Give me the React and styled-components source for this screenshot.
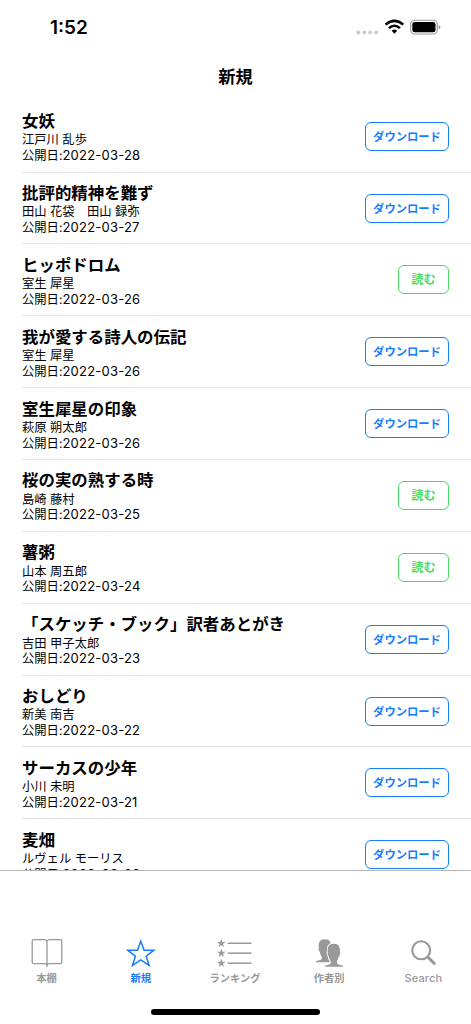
import React from 'react'
import { useState } from 'react'
import styled, { createGlobalStyle } from 'styled-components'

const GlobalStyle = createGlobalStyle`
  body {
    margin: 0;
    background-color: #fff;
    font-family: Inter, "Noto Sans CJK JP", sans-serif;
    color: #000;
  }
`

const Screen = styled.div`
  height: 1024px;
  display: flex;
  flex-direction: column;
  overflow: hidden;
`

const StatusBar = styled.header`
  height: 54px;
  flex: none;
  box-sizing: border-box;
  padding: 1px 29px 0 50px;
  display: flex;
  justify-content: space-between;
  align-items: center;
`

const Time = styled.span`
  padding-top: 1px;
  font-size: 19px;
  font-weight: 600;
  line-height: 22px;
`

const Title = styled.h1`
  height: 46.7px;
  flex: none;
  margin: 0;
  font-size: 17.2px;
  font-weight: 700;
  line-height: 45px;
  text-align: center;
`

const List = styled.ul`
  flex: 1;
  min-height: 0;
  margin: 0;
  padding: 0;
  list-style: none;
  overflow: hidden;
`

const Row = styled.li`
  height: 71.86px;
  box-sizing: border-box;
  margin-left: 22px;
  padding: 10.4px 22px 0 0;
  border-bottom: 1px solid #e4e4e5;
  display: flex;
  justify-content: space-between;
  align-items: flex-start;
`

const BookTitle = styled.h2`
  margin: 0;
  font-size: 16.45px;
  font-weight: 700;
  line-height: 21.4px;
  white-space: nowrap;
`

const Detail = styled.p`
  margin: 0;
  font-size: 12.3px;
  line-height: 15.7px;
  white-space: nowrap;
`

const PublishedOn = styled.time`
  font-size: 13px;
  letter-spacing: 0.22px;
  line-height: 1;
`

const Btn = styled.button`
  width: ${props => props.$done ? '51px' : '84px'};
  height: 29px;
  margin-top: 10.6px;
  padding: 0;
  flex: none;
  border: 1.2px solid currentColor;
  border-radius: 6px;
  background-color: transparent;
  color: ${props => props.$done ? '#4cd964' : '#147eff'};
  font-family: inherit;
  font-size: ${props => props.$done ? '12.2px' : '11.3px'};
  font-weight: 700;
  line-height: 28px;
  white-space: nowrap;
`

const TabBar = styled.nav`
  height: 154px;
  flex: none;
  box-sizing: border-box;
  border-top: 1px solid #b4b4b4;
  display: flex;
  flex-direction: column;
  align-items: center;
  justify-content: space-between;
  padding: 64px 0 9px;
`

const Tabs = styled.div`
  width: 100%;
  display: grid;
  grid-template-columns: repeat(5, 1fr);
`

const Tab = styled.button`
  padding: 0;
  border: none;
  background: none;
  display: flex;
  flex-direction: column;
  align-items: center;
  color: ${props => props.$active ? '#147eff' : '#999'};
  font-family: inherit;
  line-height: 14px;
`

const Label = styled.span`
  margin-left: -1px;
  font-size: ${props => props.$latin ? '11px' : '10.3px'};
  font-weight: ${props => props.$latin ? 500 : 700};
  letter-spacing: ${props => props.$latin ? '0.1px' : '0'};
`

const HomeBar = styled.div`
  width: 169px;
  height: 6px;
  border-radius: 3px;
  background-color: #000;
`

const STAR = 'M0 -4.4 L1.1 -1.4 L4.3 -1.4 L1.7 0.6 L2.65 3.7 L0 1.9 L-2.65 3.7 L-1.7 0.6 L-4.3 -1.4 L-1.1 -1.4 Z'

const StatusIcons = () => (
  <svg width="86" height="20" viewBox="0 0 86 20">
    <g fill="#ccc">
      <circle cx="2.4" cy="14.4" r="2" />
      <circle cx="8.4" cy="14.4" r="2" />
      <circle cx="14.2" cy="14.4" r="2" />
      <circle cx="20.1" cy="14.4" r="2" />
    </g>
    <g fill="none" stroke="#000" strokeWidth="2.5">
      <path d="M29.6 6.6 Q38.4 -0.9 47.2 6.6" />
      <path d="M32.8 10.1 Q38.4 5.3 44 10.1" />
    </g>
    <path d="M35.7 12.7 Q38.4 10.5 41.1 12.7 L38.4 15.8 Z" />
    <rect x="54.6" y="2.3" width="26.7" height="13.7" rx="4" fill="none" stroke="#999" strokeWidth="1.1" />
    <rect x="56.3" y="4" width="23.2" height="10.3" rx="2.3" />
    <path d="M82.7 6.9 Q84.6 7.7 84.6 9.1 Q84.6 10.5 82.7 11.3 Z" fill="#999" />
  </svg>
)

const BookIcon = () => (
  <svg width="36" height="36" viewBox="0 0 36 36" fill="none" stroke="currentColor" strokeWidth="1.3">
    <path d="M18 6.2 Q17.2 4.7 15.4 4.7 H4.7 Q3.2 4.7 3.2 6.2 V27.2 Q3.2 28.7 4.7 28.7 H15.4 Q17.5 28.7 18 30.5 Q18.5 28.7 20.6 28.7 H31.3 Q32.8 28.7 32.8 27.2 V6.2 Q32.8 4.7 31.3 4.7 H20.6 Q18.8 4.7 18 6.2 V31.5" />
  </svg>
)

const StarIcon = () => (
  <svg width="36" height="36" viewBox="0 0 36 36" fill="none" stroke="currentColor" strokeWidth="1.5">
    <path d="M17.8 6.2 L21.1 15.2 H30.9 L23.2 21.2 L26.1 30.4 L17.8 24.8 L9.5 30.4 L12.4 21.2 L4.7 15.2 H14.5 Z" />
  </svg>
)

const RankingIcon = () => (
  <svg width="36" height="36" viewBox="0 0 36 36" fill="currentColor">
    {[8.3, 18.2, 28.2].map(y => (
      <g key={y}>
        <path d={STAR} transform={`translate(4.3 ${y})`} />
        <rect x="10.7" y={y - 0.8} width="23.8" height="1.5" />
      </g>
    ))}
  </svg>
)

const HEAD = 'M18.4 31.7 Q18.7 30.6 21 30.1 C23.5 29.5 24.8 29 24.8 27.7 V26 C23.4 24.6 23.2 23 22.8 21.2 C21.7 21 21.3 18 21.8 17.2 C21.2 12 22.7 8.7 27.8 8.7 C33 8.7 34.3 12 33.8 17.2 C34.4 18 34 21 32.8 21.2 C32.4 23 32 24.6 31 26 V27.7 C31 29 32.3 29.5 34.8 30.1 Q37.2 30.6 37.5 31.7 Z'

const AuthorsIcon = () => (
  <svg width="36" height="36" viewBox="0 0 36 36" fill="currentColor">
    <path d={HEAD} transform="translate(-15 -4.5)" />
    <path d={HEAD} transform="translate(-6 0)" stroke="#fff" strokeWidth="2" />
    <path d={HEAD} transform="translate(-6 0)" />
  </svg>
)

const SearchIcon = () => (
  <svg width="36" height="36" viewBox="0 0 36 36" fill="none" stroke="currentColor">
    <circle cx="15.2" cy="15.3" r="9" strokeWidth="2.1" />
    <path d="M21.8 22 L28.2 28.4" strokeWidth="3" strokeLinecap="round" />
  </svg>
)

const books = [
  { title: '女妖', author: '江戸川 乱歩', date: '2022-03-28' },
  { title: '批評的精神を難ず', author: '田山 花袋　田山 録弥', date: '2022-03-27' },
  { title: 'ヒッポドロム', author: '室生 犀星', date: '2022-03-26', done: true },
  { title: '我が愛する詩人の伝記', author: '室生 犀星', date: '2022-03-26' },
  { title: '室生犀星の印象', author: '萩原 朔太郎', date: '2022-03-26' },
  { title: '桜の実の熟する時', author: '島崎 藤村', date: '2022-03-25', done: true },
  { title: '薯粥', author: '山本 周五郎', date: '2022-03-24', done: true },
  { title: '「スケッチ・ブック」訳者あとがき', author: '吉田 甲子太郎', date: '2022-03-23' },
  { title: 'おしどり', author: '新美 南吉', date: '2022-03-22' },
  { title: 'サーカスの少年', author: '小川 未明', date: '2022-03-21' },
  { title: '麦畑', author: 'ルヴェル モーリス', date: '2022-03-20' },
]

const tabs = [
  { label: '本棚', icon: BookIcon },
  { label: '新規', icon: StarIcon },
  { label: 'ランキング', icon: RankingIcon },
  { label: '作者別', icon: AuthorsIcon },
  { label: 'Search', icon: SearchIcon, latin: true },
]

const App = () => {
  const [active, setActive] = useState('新規')

  return (
    <Screen>
      <GlobalStyle />
      <StatusBar>
        <Time>1:52</Time>
        <StatusIcons />
      </StatusBar>
      <Title>新規</Title>
      <List>
        {books.map(book => (
          <Row key={book.title}>
            <div>
              <BookTitle>{book.title}</BookTitle>
              <Detail>{book.author}</Detail>
              <Detail>公開日:<PublishedOn>{book.date}</PublishedOn></Detail>
            </div>
            <Btn $done={book.done}>{book.done ? '読む' : 'ダウンロード'}</Btn>
          </Row>
        ))}
      </List>
      <TabBar>
        <Tabs>
          {tabs.map(({ label, icon: Icon, latin }) => (
            <Tab key={label} $active={label === active} onClick={() => setActive(label)}>
              <Icon />
              <Label $latin={latin}>{label}</Label>
            </Tab>
          ))}
        </Tabs>
        <HomeBar />
      </TabBar>
    </Screen>
  )
}

export default App
